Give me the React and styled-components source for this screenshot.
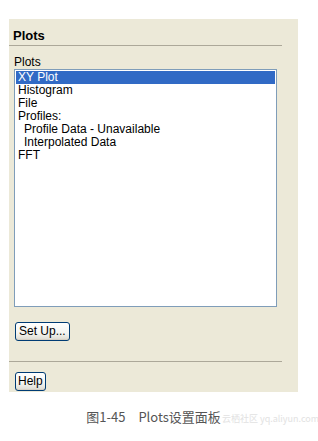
import React from 'react'
import styled, { createGlobalStyle } from 'styled-components'

const GlobalStyle = createGlobalStyle`
  html, body {
    margin: 0;
    padding: 0;
    background: #ffffff;
  }
  body {
    font-family: "Liberation Sans", Arial, sans-serif;
  }
`

const Page = styled.div`
  width: 318px;
  height: 441px;
  padding: 19px 0 0 9px;
  box-sizing: border-box;
`

const Panel = styled.div`
  width: 289px;
  height: 373px;
  background: #ece9d8;
  box-sizing: border-box;
  padding-right: 16px;
  display: flex;
  flex-direction: column;
`

const Title = styled.div`
  font-size: 13px;
  font-weight: bold;
  color: #000;
  line-height: 16px;
  padding: 9px 0 0 4px;
  height: 17px;
  border-bottom: 1px solid #aca899;
`

const Section = styled.div`
  padding: 10px 5px 0 5px;
  display: flex;
  flex-direction: column;
  align-items: flex-start;
`

const Label = styled.div`
  font-size: 12px;
  line-height: 13px;
  color: #000;
`

const ListBox = styled.ul`
  list-style: none;
  margin: 0;
  padding: 1px;
  width: 263px;
  height: 238px;
  box-sizing: border-box;
  background: #fff;
  border: 1px solid #7f9db9;
  align-self: stretch;
`

const Item = styled.li`
  font-size: 12px;
  line-height: 13px;
  height: 13px;
  white-space: nowrap;
  padding-left: ${p => (p.$indent ? 8 : 2)}px;
  background: ${p => (p.$selected ? '#316ac5' : 'transparent')};
  color: ${p => (p.$selected ? '#fff' : '#000')};
`

const Button = styled.button`
  font-family: "Liberation Sans", Arial, sans-serif;
  font-size: 12px;
  height: 19px;
  padding: 0 ${p => p.$pad}px;
  border: 1px solid #003c74;
  border-radius: 3px;
  color: #000;
  background: linear-gradient(#ffffff 0%, #f4f4f0 60%, #dcdad0 100%);
  box-shadow: inset 0 -1px 0 #d6d0c5;
  line-height: 17px;
`

const ButtonRow = styled.div`
  padding: ${p => p.$top}px 0 0 6px;
`

const Separator = styled.div`
  margin-top: 20px;
  height: 1px;
  background: #aca899;
`

const Caption = styled.div`
  position: relative;
  width: 289px;
  margin-top: 17px;
  text-align: center;
  font-family: "Noto Sans CJK SC", "Liberation Sans", sans-serif;
  font-size: 13px;
  color: #555;
  line-height: 16px;
`

const Gap = styled.span`
  display: inline-block;
  width: 13px;
`

const Watermark = styled.span`
  position: absolute;
  left: 213px;
  top: 4px;
  font-size: 9px;
  line-height: 11px;
  color: #e2e2e2;
  white-space: nowrap;
`

const items = [
  { text: 'XY Plot', selected: true },
  { text: 'Histogram' },
  { text: 'File' },
  { text: 'Profiles:' },
  { text: 'Profile Data - Unavailable', indent: true },
  { text: 'Interpolated Data', indent: true },
  { text: 'FFT' },
]

export default function App() {
  return (
    <>
      <GlobalStyle />
      <Page>
        <Panel>
          <Title>Plots</Title>
          <Section>
            <Label>Plots</Label>
            <ListBox>
              {items.map(it => (
                <Item key={it.text} $selected={it.selected} $indent={it.indent}>
                  {it.text}
                </Item>
              ))}
            </ListBox>
          </Section>
          <ButtonRow $top={14}>
            <Button $pad={3}>Set Up...</Button>
          </ButtonRow>
          <Separator />
          <ButtonRow $top={9}>
            <Button $pad={2}>Help</Button>
          </ButtonRow>
        </Panel>
        <Caption>
          图1-45<Gap />Plots设置面板
          <Watermark>云栖社区 yq.aliyun.com</Watermark>
        </Caption>
      </Page>
    </>
  )
}
